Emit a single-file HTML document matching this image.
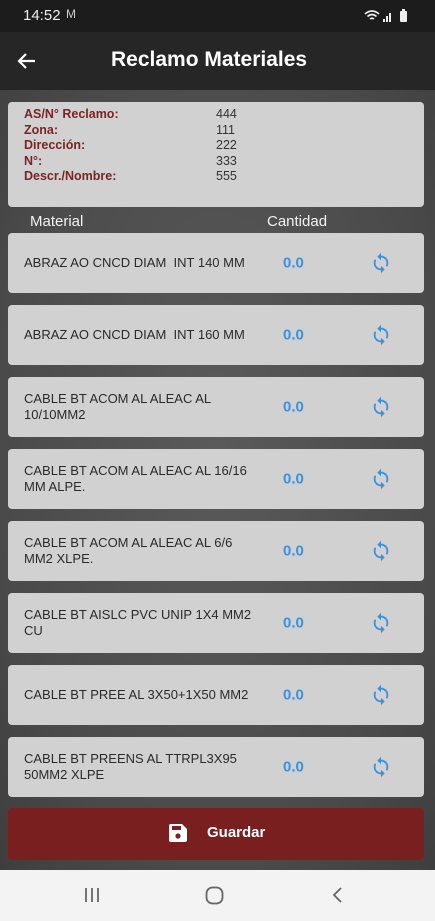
<!DOCTYPE html>
<html><head><meta charset="utf-8"><style>
*{margin:0;padding:0;box-sizing:border-box}
body{width:435px;height:921px;overflow:hidden;font-family:"Liberation Sans",sans-serif;background:#4c4c4c;position:relative}
.sb{position:absolute;top:0;left:0;width:435px;height:32px;background:#1c1c1c;color:#eee;font-size:15px}
.ab{position:absolute;top:32px;left:0;width:435px;height:58px;background:#262626;color:#fff}
.main{position:absolute;top:90px;left:0;width:435px;height:780px;background:radial-gradient(ellipse at 50% 45%,#5a5a5a 0%,#4a4a4a 70%,#3e3e3e 100%)}
.card{position:absolute;left:8px;width:416px;background:#d1d1d1;border-radius:4px}
.info{top:102px;height:105px;font-size:12.5px;line-height:15.5px;padding:5px 0 0 16px}
.info .l{color:#7a2424;font-weight:bold;display:inline-block;width:192px}
.info .v{color:#333}
.row{height:60px}
.row .t{position:absolute;left:16px;top:50%;transform:translateY(-50%);font-size:13px;color:#2a2a2a;line-height:16px;width:240px}
.row .q{position:absolute;left:275px;top:50%;transform:translateY(-50%);font-size:15px;font-weight:bold;color:#3a92de}
.row svg{position:absolute;left:362px;top:19px}
.hd{position:absolute;top:213px;color:#f2f2f2;font-size:15px}
.btn{position:absolute;left:8px;top:808px;width:416px;height:52px;background:#7a1f1f;border-radius:4px;color:#fff;font-weight:bold;font-size:15px}
.nav{position:absolute;top:870px;left:0;width:435px;height:51px;background:#f3f3f3}
</style></head><body>
<div class="sb"><span style="position:absolute;left:23px;top:7px">14:52</span><span style="position:absolute;left:66px;top:7px;font-size:12px;color:#ccc">M</span>
<svg style="position:absolute;left:364px;top:9px" width="48" height="14"><path d="M1 5 Q8 -1 15 5 M3.5 7.5 Q8 3.5 12.5 7.5 M6 10 Q8 8.5 10 10" stroke="#eee" stroke-width="1.6" fill="none"/><rect x="19" y="10" width="2" height="3" fill="#eee"/><rect x="22" y="7" width="2" height="6" fill="#eee"/><rect x="25" y="4" width="2" height="9" fill="#eee"/><rect x="36" y="2" width="7" height="11" rx="1" fill="#eee"/><rect x="38" y="0" width="3" height="3" fill="#eee"/></svg></div>
<div class="ab"><svg style="position:absolute;left:17px;top:20px" width="20" height="18"><path d="M18 9H3M9 2L2 9l7 7" stroke="#fff" stroke-width="2.2" fill="none"/></svg>
<span style="position:absolute;left:111px;top:16px;font-size:21px;font-weight:bold">Reclamo Materiales</span></div>
<div class="main"></div>
<div class="card info">
<div><span class="l">AS/N° Reclamo:</span><span class="v">444</span></div>
<div><span class="l">Zona:</span><span class="v">111</span></div>
<div><span class="l">Dirección:</span><span class="v">222</span></div>
<div><span class="l">N°:</span><span class="v">333</span></div>
<div><span class="l">Descr./Nombre:</span><span class="v">555</span></div>
</div>
<div class="hd" style="left:30px">Material</div><div class="hd" style="left:267px">Cantidad</div>
<div class="card row" style="top:233px"><div class="t">ABRAZ AO CNCD DIAM&nbsp; INT 140 MM</div><div class="q">0.0</div><svg width="22" height="22" viewBox="0 0 24 24"><path fill="#3a92de" d="M12 4V1L8 5l4 4V6c3.3 0 6 2.7 6 6 0 1-.25 1.97-.7 2.8l1.46 1.46A7.9 7.9 0 0 0 20 12c0-4.4-3.6-8-8-8zm0 14c-3.3 0-6-2.7-6-6 0-1 .25-1.97.7-2.8L5.24 7.74A7.9 7.9 0 0 0 4 12c0 4.4 3.6 8 8 8v3l4-4-4-4v3z"/></svg></div>
<div class="card row" style="top:305px"><div class="t">ABRAZ AO CNCD DIAM&nbsp; INT 160 MM</div><div class="q">0.0</div><svg width="22" height="22" viewBox="0 0 24 24"><path fill="#3a92de" d="M12 4V1L8 5l4 4V6c3.3 0 6 2.7 6 6 0 1-.25 1.97-.7 2.8l1.46 1.46A7.9 7.9 0 0 0 20 12c0-4.4-3.6-8-8-8zm0 14c-3.3 0-6-2.7-6-6 0-1 .25-1.97.7-2.8L5.24 7.74A7.9 7.9 0 0 0 4 12c0 4.4 3.6 8 8 8v3l4-4-4-4v3z"/></svg></div>
<div class="card row" style="top:377px"><div class="t">CABLE BT ACOM AL ALEAC AL 10/10MM2</div><div class="q">0.0</div><svg width="22" height="22" viewBox="0 0 24 24"><path fill="#3a92de" d="M12 4V1L8 5l4 4V6c3.3 0 6 2.7 6 6 0 1-.25 1.97-.7 2.8l1.46 1.46A7.9 7.9 0 0 0 20 12c0-4.4-3.6-8-8-8zm0 14c-3.3 0-6-2.7-6-6 0-1 .25-1.97.7-2.8L5.24 7.74A7.9 7.9 0 0 0 4 12c0 4.4 3.6 8 8 8v3l4-4-4-4v3z"/></svg></div>
<div class="card row" style="top:449px"><div class="t">CABLE BT ACOM AL ALEAC AL 16/16 MM ALPE.</div><div class="q">0.0</div><svg width="22" height="22" viewBox="0 0 24 24"><path fill="#3a92de" d="M12 4V1L8 5l4 4V6c3.3 0 6 2.7 6 6 0 1-.25 1.97-.7 2.8l1.46 1.46A7.9 7.9 0 0 0 20 12c0-4.4-3.6-8-8-8zm0 14c-3.3 0-6-2.7-6-6 0-1 .25-1.97.7-2.8L5.24 7.74A7.9 7.9 0 0 0 4 12c0 4.4 3.6 8 8 8v3l4-4-4-4v3z"/></svg></div>
<div class="card row" style="top:521px"><div class="t">CABLE BT ACOM AL ALEAC AL 6/6 MM2 XLPE.</div><div class="q">0.0</div><svg width="22" height="22" viewBox="0 0 24 24"><path fill="#3a92de" d="M12 4V1L8 5l4 4V6c3.3 0 6 2.7 6 6 0 1-.25 1.97-.7 2.8l1.46 1.46A7.9 7.9 0 0 0 20 12c0-4.4-3.6-8-8-8zm0 14c-3.3 0-6-2.7-6-6 0-1 .25-1.970.7-2.8L5.24 7.74A7.9 7.9 0 0 0 4 12c0 4.4 3.6 8 8 8v3l4-4-4-4v3z"/></svg></div>
<div class="card row" style="top:593px"><div class="t">CABLE BT AISLC PVC UNIP 1X4 MM2 CU</div><div class="q">0.0</div><svg width="22" height="22" viewBox="0 0 24 24"><path fill="#3a92de" d="M12 4V1L8 5l4 4V6c3.3 0 6 2.7 6 6 0 1-.25 1.97-.7 2.8l1.46 1.46A7.9 7.9 0 0 0 20 12c0-4.4-3.6-8-8-8zm0 14c-3.3 0-6-2.7-6-6 0-1 .25-1.97.7-2.8L5.24 7.74A7.9 7.9 0 0 0 4 12c0 4.4 3.6 8 8 8v3l4-4-4-4v3z"/></svg></div>
<div class="card row" style="top:665px"><div class="t">CABLE BT PREE AL 3X50+1X50 MM2</div><div class="q">0.0</div><svg width="22" height="22" viewBox="0 0 24 24"><path fill="#3a92de" d="M12 4V1L8 5l4 4V6c3.3 0 6 2.7 6 6 0 1-.25 1.97-.7 2.8l1.46 1.46A7.9 7.9 0 0 0 20 12c0-4.4-3.6-8-8-8zm0 14c-3.3 0-6-2.7-6-6 0-1 .25-1.97.7-2.8L5.24 7.74A7.9 7.9 0 0 0 4 12c0 4.4 3.6 8 8 8v3l4-4-4-4v3z"/></svg></div>
<div class="card row" style="top:737px"><div class="t">CABLE BT PREENS AL TTRPL3X95 50MM2 XLPE</div><div class="q">0.0</div><svg width="22" height="22" viewBox="0 0 24 24"><path fill="#3a92de" d="M12 4V1L8 5l4 4V6c3.3 0 6 2.7 6 6 0 1-.25 1.97-.7 2.8l1.46 1.46A7.9 7.9 0 0 0 20 12c0-4.4-3.6-8-8-8zm0 14c-3.3 0-6-2.7-6-6 0-1 .25-1.97.7-2.8L5.24 7.74A7.9 7.9 0 0 0 4 12c0 4.4 3.6 8 8 8v3l4-4-4-4v3z"/></svg></div>
<div class="btn"><svg style="position:absolute;left:160px;top:15px" width="20" height="20" viewBox="0 0 20 20"><path d="M1 3a2 2 0 0 1 2-2h11l5 5v11a2 2 0 0 1-2 2H3a2 2 0 0 1-2-2z" fill="#fff"/><rect x="4" y="3" width="9" height="4" fill="#7a1f1f"/><circle cx="10" cy="13" r="2.6" fill="#7a1f1f"/></svg><span style="position:absolute;left:199px;top:16px">Guardar</span></div>
<div class="nav"><svg style="position:absolute;left:84px;top:16px" width="18" height="18"><path d="M2 2v14M8 2v14M14 2v14" stroke="#666" stroke-width="1.8"/></svg>
<svg style="position:absolute;left:205px;top:16px" width="19" height="19"><rect x="1.5" y="1.5" width="16" height="16" rx="6" stroke="#666" stroke-width="1.8" fill="none"/></svg>
<svg style="position:absolute;left:331px;top:16px" width="12" height="18"><path d="M10 2L3 9l7 7" stroke="#666" stroke-width="1.8" fill="none"/></svg></div>
</body></html>
